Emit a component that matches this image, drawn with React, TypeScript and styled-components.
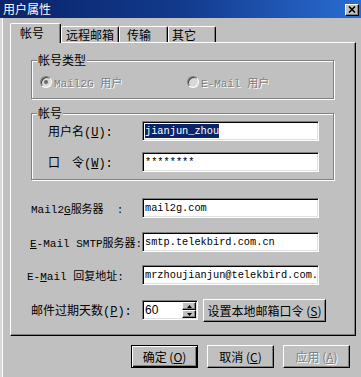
import React from "react";
import styled, { createGlobalStyle, css } from "styled-components";

const GlobalStyle = createGlobalStyle`
  html, body {
    margin: 0;
    padding: 0;
    background: #c0c0c0;
  }
  body {
    font-family: "Liberation Mono", "Noto Sans CJK SC", monospace;
    font-size: 12px;
    color: #000;
  }
`;

const cjk = `"Noto Sans CJK SC", "Liberation Sans", sans-serif`;
const mono = `"Liberation Mono", "Noto Sans CJK SC", monospace`;

const Window = styled.div`
  width: 361px;
  height: 377px;
  background: #c0c0c0;
  overflow: hidden;
  display: flex;
  flex-direction: column;
`;

const TitleBar = styled.div`
  height: 18px;
  flex: none;
  display: flex;
  align-items: center;
  justify-content: space-between;
  padding: 0 2px 0 3px;
  background: linear-gradient(90deg, #0a246a 0%, #123a8c 50%, #2a6cd2 100%);
  color: #fff;
  font-family: ${cjk};
  font-size: 12px;
  line-height: 14px;
`;

const CloseButton = styled.div`
  width: 14px;
  height: 12px;
  box-sizing: border-box;
  background: #c0c0c0;
  border: 1px solid;
  border-color: #fff #000 #000 #fff;
  box-shadow: inset -1px -1px 0 #808080;
  display: flex;
  align-items: center;
  justify-content: center;
  margin-top: 1px;
`;

const Body = styled.div`
  flex: 1;
  padding: 5px 5px 0 10px;
  box-shadow: inset 2px 0 0 #d8d8d8, inset 3px 0 0 #fff;
`;

const TabStrip = styled.div`
  height: 19px;
  display: flex;
  align-items: flex-end;
`;

const Tab = styled.div<{ $active?: boolean; $w: number; $pl: number }>`
  box-sizing: border-box;
  width: ${(p) => p.$w}px;
  height: ${(p) => (p.$active ? 20 : 16)}px;
  padding: ${(p) => (p.$active ? 2 : 1)}px 0 0 ${(p) => p.$pl}px;
  border-top: 1px solid #fff;
  border-left: 1px solid #fff;
  border-right: 1px solid #000;
  box-shadow: inset -1px 0 0 #808080;
  border-radius: 2px 2px 0 0;
  background: #c0c0c0;
  font-family: ${cjk};
  font-size: 12px;
  line-height: 14px;
  white-space: nowrap;
  position: relative;
  z-index: ${(p) => (p.$active ? 1 : 0)};
  margin-bottom: ${(p) => (p.$active ? -1 : 0)}px;
`;

const Panel = styled.div`
  box-sizing: border-box;
  height: 294px;
  border: 1px solid;
  border-color: #fff #000 #000 #fff;
  box-shadow: inset -1px -1px 0 #808080;
  padding: 10px 21px 0 20px;
  display: flex;
  flex-direction: column;
`;

const Group = styled.fieldset<{ $pad: string; $mt?: number }>`
  margin: ${(p) => p.$mt ?? 0}px 0 0;
  min-width: 0;
  border: 1px solid #808080;
  box-shadow: inset 1px 1px 0 #fff, 1px 1px 0 #fff;
  padding: ${(p) => p.$pad};
  display: flex;
  flex-direction: column;
`;

const Legend = styled.legend`
  padding: 0 1px;
  margin: 0;
  background: #c0c0c0;
  font-family: ${cjk};
  font-size: 12px;
  line-height: 14px;
`;

const RadioRow = styled.div`
  display: flex;
  height: 16px;
  align-items: center;
  padding-left: 3px;
`;

const RadioItem = styled.div<{ $w?: number }>`
  display: flex;
  align-items: center;
  gap: 2px;
  width: ${(p) => (p.$w ? `${p.$w}px` : "auto")};
  font-family: ${mono};
  font-size: 11px;
  color: #808080;
  text-shadow: 1px 1px 0 #fff;
  white-space: pre;
`;

const RadioCircle = styled.span<{ $checked?: boolean }>`
  width: 12px;
  height: 12px;
  box-sizing: border-box;
  flex: none;
  border-radius: 50%;
  border: 1px solid;
  border-color: #808080 #fff #fff #808080;
  background: #d8d8d8;
  box-shadow: inset 1px 1px 0 #404040, inset -1px -1px 0 #dfdfdf;
  position: relative;

  &::after {
    content: "";
    display: ${(p) => (p.$checked ? "block" : "none")};
    position: absolute;
    left: 3px;
    top: 3px;
    width: 4px;
    height: 4px;
    border-radius: 50%;
    background: #6a6a6a;
  }
`;

const Rows = styled.div<{ $gap: number; $mt?: number }>`
  display: flex;
  flex-direction: column;
  gap: ${(p) => p.$gap}px;
  margin-top: ${(p) => p.$mt ?? 0}px;
`;

const Row = styled.div`
  display: flex;
  align-items: center;
`;

const Label = styled.div<{ $w: number; $size?: number; $indent?: number }>`
  width: ${(p) => p.$w}px;
  margin-left: ${(p) => p.$indent ?? 0}px;
  flex: none;
  font-family: ${mono};
  font-size: ${(p) => p.$size ?? 12}px;
  white-space: pre;
`;

const Field = styled.div<{ $w: number }>`
  box-sizing: border-box;
  width: ${(p) => p.$w}px;
  height: 20px;
  flex: none;
  display: flex;
  align-items: center;
  padding: 0 0 0 2px;
  background: #fff;
  border: 1px solid;
  border-color: #808080 #fff #fff #808080;
  box-shadow: inset 1px 1px 0 #000, inset -1px -1px 0 #dfdfdf;
  font-family: ${mono};
  font-size: 10.3px;
  white-space: nowrap;
  overflow: hidden;
`;

const Selected = styled.span`
  display: inline-block;
  line-height: 14px;
  background: #0a246a;
  color: #fff;
`;

const SpinValue = styled.span`
  flex: 1;
  font-family: "Liberation Sans", sans-serif;
  font-size: 12px;
`;

const SpinButtons = styled.div`
  display: flex;
  flex-direction: column;
  width: 14px;
  height: 16px;
  margin-right: 1px;
`;

const SpinButton = styled.div`
  box-sizing: border-box;
  height: 8px;
  background: #c0c0c0;
  border: 1px solid;
  border-color: #fff #000 #000 #fff;
  box-shadow: inset -1px -1px 0 #808080;
  display: flex;
  align-items: center;
  justify-content: center;
`;

const PushButton = styled.div<{ $w: number; $default?: boolean; $disabled?: boolean }>`
  box-sizing: border-box;
  width: ${(p) => p.$w}px;
  height: 23px;
  flex: none;
  display: flex;
  align-items: center;
  justify-content: center;
  background: #c0c0c0;
  border: 1px solid;
  border-color: #fff #000 #000 #fff;
  box-shadow: inset -1px -1px 0 #808080;
  font-family: ${cjk};
  font-size: 12px;
  white-space: pre;
  ${(p) =>
    p.$default &&
    css`
      border-color: #000;
      box-shadow: inset 1px 1px 0 #fff, inset -1px -1px 0 #000,
        inset -2px -2px 0 #808080;
    `}
  ${(p) =>
    p.$disabled &&
    css`
      color: #808080;
      text-shadow: 1px 1px 0 #fff;
    `}
`;

const SideButton = styled(PushButton)`
  margin-left: 5px;
`;

const Footer = styled.div`
  display: flex;
  justify-content: flex-end;
  gap: 9px;
  margin-top: 9px;
  padding-right: 6px;
`;

function Arrow({ up }: { up?: boolean }) {
  return (
    <svg width="5" height="3" viewBox="0 0 5 3">
      <path d={up ? "M2.5 0 L5 3 L0 3 Z" : "M0 0 L5 0 L2.5 3 Z"} fill="#000" />
    </svg>
  );
}

export default function App() {
  return (
    <Window>
      <GlobalStyle />
      <TitleBar>
        <span>用户属性</span>
        <CloseButton>
          <svg width="8" height="7" viewBox="0 0 8 7">
            <path d="M1 0.5 L7 6.5 M7 0.5 L1 6.5" stroke="#000" strokeWidth="1.6" />
          </svg>
        </CloseButton>
      </TitleBar>
      <Body>
        <TabStrip>
          <Tab $active $w={51} $pl={9}>帐号</Tab>
          <Tab $w={58} $pl={4}>远程邮箱</Tab>
          <Tab $w={49} $pl={7}>传输</Tab>
          <Tab $w={48} $pl={3}>其它</Tab>
        </TabStrip>
        <Panel>
          <Group $pad="7px 5px 8px">
            <Legend>帐号类型</Legend>
            <RadioRow>
              <RadioItem $w={147}>
                <RadioCircle $checked />
                Mail2G 用户
              </RadioItem>
              <RadioItem>
                <RadioCircle />
                E-Mail 用户
              </RadioItem>
            </RadioRow>
          </Group>
          <Group $pad="1px 5px 7px" $mt={7}>
            <Legend>帐号</Legend>
            <Rows $gap={11}>
              <Row>
                <Label $w={94} $indent={11}>
                  用户名(<u>U</u>):
                </Label>
                <Field $w={177}>
                  <Selected>jianjun_zhou</Selected>
                </Field>
              </Row>
              <Row>
                <Label $w={94} $indent={11}>
                  口　令(<u>W</u>):
                </Label>
                <Field $w={177}>********</Field>
              </Row>
            </Rows>
          </Group>
          <Rows $gap={13.5} $mt={18}>
            <Row>
              <Label $w={111} $size={11}>
                Mail2<u>G</u>服务器  :
              </Label>
              <Field $w={177}>mail2g.com</Field>
            </Row>
            <Row>
              <Label $w={112} $size={11} $indent={-1}>
                <u>E</u>-Mail SMTP服务器:
              </Label>
              <Field $w={177}>smtp.telekbird.com.cn</Field>
            </Row>
            <Row>
              <Label $w={115} $size={11} $indent={-4}>
                E-<u>M</u>ail 回复地址:
              </Label>
              <Field $w={177}>mrzhoujianjun@telekbird.com.</Field>
            </Row>
            <Row>
              <Label $w={111} $size={12}>
                邮件过期天数(<u>P</u>):
              </Label>
              <Field $w={56}>
                <SpinValue>60</SpinValue>
                <SpinButtons>
                  <SpinButton>
                    <Arrow up />
                  </SpinButton>
                  <SpinButton>
                    <Arrow />
                  </SpinButton>
                </SpinButtons>
              </Field>
              <SideButton $w={123}>
                设置本地邮箱口令 (<u>S</u>)
              </SideButton>
            </Row>
          </Rows>
        </Panel>
        <Footer>
          <PushButton $w={67} $default>
            确定 (<u>O</u>)
          </PushButton>
          <PushButton $w={67}>
            取消 (<u>C</u>)
          </PushButton>
          <PushButton $w={67} $disabled>
            应用 (<u>A</u>)
          </PushButton>
        </Footer>
      </Body>
    </Window>
  );
}
